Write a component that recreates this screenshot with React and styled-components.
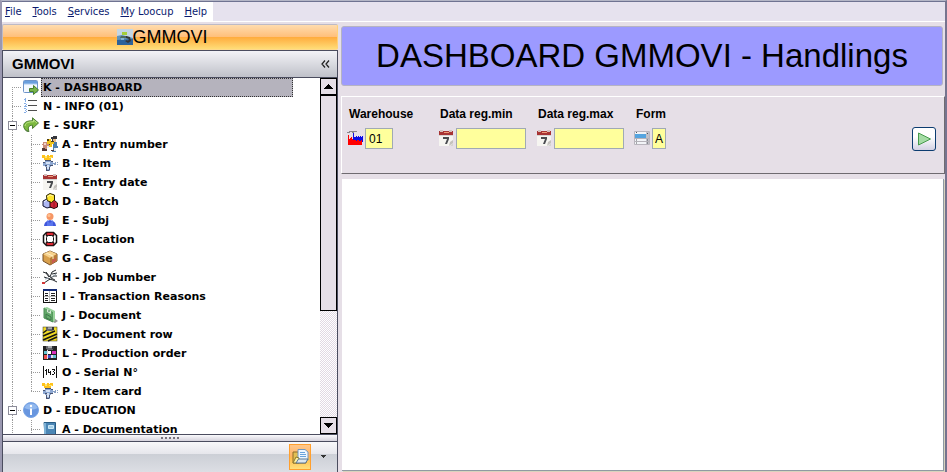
import React, { useState } from "react";
import styled, { createGlobalStyle, css } from "styled-components";

const GlobalStyle = createGlobalStyle`
  * { box-sizing: border-box; }
  body { margin: 0; background: #e6dfe7; color: #000; }
  button, input { font: inherit; color: inherit; }
`;

const INK = "#4b4d5f";

const Window = styled.div`
  height: 100vh;
  display: flex;
  flex-direction: column;
  overflow: hidden;
  background: #e6dfe7;
  border-top: 1px solid #b4b6c6;
  border-left: 2px solid #9a98b0;
  border-right: 2px solid #76748f;
  font-family: "Liberation Sans", Arial, sans-serif;
`;

const MenuStrip = styled.nav`
  display: flex;
  flex: none;
  background: #e6e2ee;
  border-top: 1px solid #6f7391;
  border-bottom: 1px solid #fff;
`;

const MenuItems = styled.div`
  display: flex;
  gap: 11px;
  height: 19px;
  padding: 0 6px 0 3px;
  background: #fff;
`;

const MenuButton = styled.button`
  padding: 0;
  border: 0;
  background: none;
  color: #0a1a6e;
  font: 11px/19px "DejaVu Sans Condensed", "Noto Sans", sans-serif;
  white-space: nowrap;
`;

const Columns = styled.div`
  flex: 1;
  min-height: 0;
  display: flex;
  gap: 3px;
  padding-top: 2px;
`;

const Sidebar = styled.aside`
  flex: none;
  width: 336px;
  display: flex;
  flex-direction: column;
  min-height: 0;
`;

const ModuleBar = styled.div`
  flex: none;
  display: flex;
  align-items: center;
  justify-content: center;
  height: 26px;
  padding-right: 16px;
  border: 1px solid #bdbac6;
  border-right-color: #ffd27a;
  border-bottom-color: #ffd98a;
  border-radius: 2px;
  background: linear-gradient(#ffdcae 0, #ffc07c 48%, #ffab3c 50%, #ffdd78 100%);
  font-size: 18px;
  line-height: 24px;
`;

const SidePanel = styled.div`
  flex: 1;
  min-height: 0;
  display: flex;
  flex-direction: column;
  border: 1px solid ${INK};
  border-bottom: 0;
`;

const PanelHeader = styled.header`
  flex: none;
  display: flex;
  justify-content: space-between;
  align-items: center;
  height: 27px;
  padding: 0 7px 0 9px;
  border-bottom: 1px solid ${INK};
  background: linear-gradient(#f3f3f7, #bfc1c9);
`;

const PanelTitle = styled.h2`
  margin: 0;
  font-size: 15px;
  line-height: 24px;
`;

const IconButton = styled.button`
  display: flex;
  padding: 0;
  border: 0;
  background: none;
`;

const TreeArea = styled.div`
  flex: 1;
  min-height: 0;
  display: flex;
  background: #fff;
`;

const Tree = styled.ul`
  flex: 1;
  min-width: 0;
  margin: 0;
  padding: 0;
  overflow: hidden;
  list-style: none;
  font: bold 11px/19px "DejaVu Sans", Verdana, sans-serif;
`;

const Branch = styled.ul`
  margin: 0;
  padding: 0;
  list-style: none;
`;

const Row = styled.div`
  display: flex;
  height: 19px;
  padding-right: 27px;
`;

const dotsDown = "repeating-linear-gradient(#9a9a9a 0 1px, transparent 1px 2px)";
const dotsAcross = "repeating-linear-gradient(90deg, #9a9a9a 0 1px, transparent 1px 2px)";

const lines = {
  none: css``,
  pass: css`background: ${dotsDown} 9px 0 / 1px 19px no-repeat;`,
  first: css`background: ${dotsDown} 9px 9px / 1px 10px no-repeat, ${dotsAcross} 9px 9px / 10px 1px no-repeat;`,
  tee: css`background: ${dotsDown} 9px 0 / 1px 19px no-repeat, ${dotsAcross} 9px 9px / 10px 1px no-repeat;`,
  last: css`background: ${dotsDown} 9px 0 / 1px 10px no-repeat, ${dotsAcross} 9px 9px / 10px 1px no-repeat;`,
};

const Gutter = styled.span`
  flex: none;
  display: flex;
  align-items: center;
  justify-content: center;
  width: 19px;
  ${(p) => lines[p.$line]}
`;

const Expander = styled.button`
  display: flex;
  width: 9px;
  height: 9px;
  padding: 0;
  border: 1px solid #8d8d9a;
  background: #fff;
`;

const IconCell = styled.span`
  flex: none;
  display: flex;
  align-items: flex-start;
  width: 19px;
  padding: 1px 0 0 1px;
`;

const NodeLabel = styled.button`
  flex: 1;
  height: 19px;
  padding: 0 1px;
  border: 1px dotted ${(p) => (p.$selected ? "#333" : "transparent")};
  background: ${(p) => (p.$selected ? "#b5b3bd" : "transparent")};
  line-height: 17px;
  text-align: left;
  white-space: nowrap;
`;

const ScrollTrack = styled.div`
  flex: none;
  display: flex;
  flex-direction: column;
  width: 17px;
  background: repeating-conic-gradient(#e2d9e3 0 25%, #fff 0 50%) 0 0 / 2px 2px;
`;

const ScrollButton = styled.button`
  flex: none;
  display: flex;
  align-items: center;
  justify-content: center;
  height: 17px;
  padding: 0;
  border: 1px solid #000;
  background: #e6dfe7;
`;

const ScrollThumb = styled.div`
  height: 67%;
  border: 1px solid #000;
  background: #e6dfe7;
`;

const ScrollRail = styled.div`
  flex: 1;
  min-height: 0;
`;

const Splitter = styled.div`
  flex: none;
  display: flex;
  align-items: center;
  justify-content: center;
  height: 8px;
  border: solid ${INK};
  border-width: 1px 0;
  background: linear-gradient(#fafafd, #d5d2dc);
`;

const SideTools = styled.footer`
  flex: none;
  display: flex;
  align-items: flex-start;
  justify-content: flex-end;
  gap: 10px;
  height: 30px;
  padding: 2px 11px 0 0;
  background: linear-gradient(#f8f8fa 0, #e6e6ec 12px, #cccfd6 12px, #dcdee4 100%);
`;

const FolderButton = styled(IconButton)`
  align-items: center;
  justify-content: center;
  width: 22px;
  height: 26px;
  border: 1px solid #ff9f2e;
  background: linear-gradient(#ffc88c 0, #ffb365 45%, #ffbd4c 55%, #ffe07c 100%);
`;

const MoreButton = styled(IconButton)`
  align-items: center;
  height: 25px;
`;

const Main = styled.main`
  flex: 1;
  min-width: 0;
  display: flex;
  flex-direction: column;
`;

const Banner = styled.h1`
  flex: none;
  margin: 2px 2px 0 0;
  padding: 10px 0;
  border: 1px solid #b5b3c3;
  border-radius: 3px;
  background: #9c9aff;
  font-size: 33px;
  font-weight: 400;
  line-height: 38px;
  text-align: center;
  white-space: nowrap;
`;

const FilterPanel = styled.form`
  flex: none;
  display: grid;
  grid-template-columns: 91px 98px 98px auto 1fr;
  margin-top: 10px;
  padding: 9px 8px 24px 5px;
  border: 1px solid #fff;
  border-right-color: #6f6b70;
  border-bottom-color: #6f6b70;
`;

const Field = styled.div`
  display: grid;
  grid-template-columns: 16px auto;
  justify-content: start;
  align-items: center;
  column-gap: 2px;
`;

const FieldLabel = styled.label`
  grid-column: 1 / -1;
  padding-left: 2px;
  font-size: 12px;
  font-weight: 700;
  line-height: 16px;
  white-space: nowrap;
`;

const FieldInput = styled.input`
  width: ${(p) => p.$width};
  height: 21px;
  margin-top: 6px;
  padding: 0 0 0 ${(p) => (p.$tight ? "2px" : "3px")};
  border: 1px solid #a0aab4;
  border-radius: 0;
  background: #ffff9c;
  font-size: 12px;
`;

const FieldIcon = styled.span`
  display: flex;
  margin-top: 5px;
`;

const RunButton = styled.button`
  justify-self: end;
  align-self: end;
  display: flex;
  align-items: center;
  justify-content: center;
  width: 24px;
  height: 24px;
  margin-bottom: -2px;
  padding: 0;
  border: 1px solid #0c3c70;
  border-radius: 3px;
  background: linear-gradient(#fff 40%, #d3d1e3);
`;

const Results = styled.section`
  flex: 1;
  min-height: 0;
  margin: 5px 1px 1px 1px;
  background: #fff;
  border: solid #8f9aa3;
  border-width: 0 1px 1px 0;
  box-shadow: 1px 1px 0 #d8d3bd;
`;

const Glyph = styled.svg`
  display: block;
  flex: none;
`;

function Svg({ w = 16, h = 16, crisp, children }) {
  return (
    <Glyph width={w} height={h} viewBox={`0 0 ${w} ${h}`} fill="none" aria-hidden="true"
      shapeRendering={crisp ? "crispEdges" : "auto"}>
      {children}
    </Glyph>
  );
}

const ModuleIcon = () => (
  <Svg>
    <rect width="16" height="16" fill="#c4d6e4" />
    <path d="M0 7l5-1 11 3v7H0z" fill="#5e92bb" />
    <path d="M0 11l16-1v6H0z" fill="#2c639a" />
    <path d="M5 3h5v3H5z" fill="#a4cf3a" />
    <path d="M4 7h6v2H3z" fill="#4d6a60" />
    <path d="M9 7l4 1 1 4-3 2-3-2 2-1 1 1 1-2-3-1z" fill="#34383b" />
    <rect x="4" y="9" width="3" height="2" fill="#83b4d4" />
  </Svg>
);

const WindowIcon = () => (
  <Svg>
    <rect x=".5" y="1.500" width="14" height="12" rx="1" fill="#f5f9ff" stroke="#6e94c9" />
    <path d="M1 2h13v3H1z" fill="#6a9fdd" />
    <path d="M1 5h13" stroke="#abc9ee" />
    <path d="M6.500 9.500h4v-3l5 4.500-5 4.500v-3h-4z" fill="#78b44b" stroke="#477f2c" />
  </Svg>
);

const ListIcon = () => (
  <Svg crisp>
    <path d="M5 2h9M5 7h9M5 12h9" stroke="#4f4f4f" transform="translate(0 .5)" />
    <path d="M2 0h1v4H2zM1 1h1v1H1zM1 5h2v1H1zM3 6h1v1H3zM2 7h1v1H2zM1 8h3v1H1zM1 10h2v1H1zM3 11h1v1H3zM2 12h1v1H2zM3 13h1v1H3zM1 14h2v1H1z" fill="#86aee6" />
  </Svg>
);

const SurfIcon = () => (
  <Svg>
    <path d="M9.500.8l6 5.200-6 5.500V8.200c-4 0-5 2.500-3.500 6.300C2.500 14 .5 11.500.7 8.500 1 5 4.500 3.700 9.500 3.800z" fill="#7db93f" stroke="#4c7d33" />
    <path d="M2 9c.5-3.500 4-4.300 8.500-4.200V3l3.500 3" stroke="#bde287" />
    <path d="M2 12.500C3 14 4.500 14.500 6 14.500" stroke="#567d45" />
  </Svg>
);

const WorkerIcon = () => (
  <Svg crisp>
    <path d="M9 1h2V0h4v3h-1v2h-4V3H9z" fill="#35363b" />
    <path d="M11 3h3v3h-3z" fill="#e8bd8b" />
    <path d="M11 6h4v4h1v2h-2v4h-4v-2h1z" fill="#4d7eae" />
    <path d="M5 3h4v2h3v3h-2v3H7V9H4V6h1z" fill="#f0c31c" />
    <path d="M5 3h2v2H5zM9 5h3v1H9zM6 8h2v1H6z" fill="#534112" />
    <path d="M1 6h4v2h2v4H5v2H1V9H0V8h1z" fill="#ca8d7d" />
    <path d="M2 7h2v2H2z" fill="#f0d2c9" />
    <path d="M0 12h3v1h2v2H0zM9 14h3v1H9z" fill="#543b3a" />
    <path d="M12 12h2v3h-2zM5 10h2v2H5z" fill="#e5eaf0" />
  </Svg>
);

const TapIcon = () => (
  <Svg crisp>
    <path d="M0 0h3v1h2V0h2v1h1V0h3v3H9v2H2V3H0z" fill="#ffc31c" />
    <path d="M3 1h2v2H3zM7 2h3v1H7z" fill="#ffe56d" />
    <path d="M3 5h6v1h2v4H9v2H8v4H4v-4H3v-1H1V7h2z" fill="#8ca7d2" />
    <path d="M3 5h6v1H3zM1 7h2v1H1zM3 10h2v1H3zM9 6h2v1H9zM8 10h3v1H8zM4 12h1v3H4zM7 12h1v3H7zM4 15h3v1H4z" fill="#4a5470" />
    <path d="M11 8h2V7h1v3h-2V9h-1zM15 7h1v1h-1zM15 9h1v1h-1z" fill="#88a0c4" />
    <path d="M4 7h4v2H4zM5 10h2v4H5z" fill="#d5e2f5" />
  </Svg>
);

const CalendarIcon = () => (
  <Svg>
    <path d="M1 2h14v14H1z" fill="#d5d3d1" />
    <path d="M1 6h14v7l-3 3H1z" fill="#f6f5f1" />
    <path d="M1 1h14v4H1z" fill="#a73434" />
    <path d="M2 0h3v2H2zM11 0h3v2h-3z" fill="#d5c0bd" />
    <path d="M6 2.500h5" stroke="#ed9b78" />
    <path d="M5 7h6v2l-2 5H7l2-5H5z" fill="#4a4c50" />
    <path d="M11 16l1-4 3-2v3z" fill="#c4c1bd" />
  </Svg>
);

const BatchIcon = () => (
  <Svg>
    <path d="M1 8l4-2 4 3v5l-4 1-4-2z" fill="#aeb8f4" stroke="#10112d" />
    <path d="M8 9l4-2 3.500 3v4L12 15.500 8 14z" fill="#cf2739" stroke="#26070a" />
    <path d="M4.500 2.500L8 .5l4.500 1.500v5L9.500 9.500 5 7.500z" fill="#ffe52c" stroke="#282307" />
    <path d="M5 4l3-2 3 1" stroke="#fff6a2" />
    <path d="M2 9l3-2" stroke="#eef1ff" />
    <path d="M12 9v5" stroke="#991229" />
  </Svg>
);

const PersonIcon = () => (
  <Svg>
    <path d="M2 14c.5-4 2.500-5 6-6 3.500 1 5.500 2 6 6z" fill="#4057dc" />
    <path d="M5 8l3 3 3-3v6H5z" fill="#5975ed" />
    <circle cx="8" cy="4.500" r="3.500" fill="#f69664" />
    <circle cx="7" cy="3.500" r="1.500" fill="#ffc08f" />
  </Svg>
);

const BuoyIcon = () => (
  <Svg>
    <path d="M4.500 1.500h7l3 3v7l-3 3h-7l-3-3v-7z" fill="#fff" stroke="#111" strokeWidth="1.500" />
    <path d="M5 1.500h6l1 3H4zM4 11.500h8l-1 3H5z" fill="#dd2933" stroke="#390b0d" />
    <rect x="4.500" y="4.500" width="7" height="7" rx="2" fill="#fff" stroke="#111" />
  </Svg>
);

const BoxIcon = () => (
  <Svg>
    <path d="M1 4l7-3 7 3v7l-7 4-7-4z" fill="#d8a04d" stroke="#765128" />
    <path d="M1 4l7-3 7 3-7 4z" fill="#f6d28e" />
    <path d="M8 8l7-4v7l-7 4z" fill="#b87b38" />
    <path d="M4 3l7 3v3" stroke="#fff0c4" />
    <path d="M10 10l4-2v3l-2 1-2 2z" fill="#c85a50" />
  </Svg>
);

const ToolsIcon = () => (
  <Svg>
    <path d="M1 3l3 1 3 4M4 3l4 5M8 8l2-5 4-2M10 5l5-1M8 9l4-2h3M7 10l4 1 4 2M9 9l4 2M2 8l6 2-6 4" stroke="#25292d" />
    <path d="M3 10l4-1M10 8l4-3" stroke="#909ca7" />
    <path d="M0 14h3" stroke="#d23636" strokeWidth="2" />
  </Svg>
);

const TableIcon = () => (
  <Svg crisp>
    <rect x="1.500" y="1.500" width="13" height="13" fill="#fff" stroke="#111" />
    <path d="M1 1h14v2H1z" fill="#142c77" />
    <path d="M7 3h1v11H7zM2 8h12v1H2z" fill="#bbb" />
    <path d="M3 5h3v1H3zM9 5h4v1H9zM3 7h3v1H3zM9 7h4v1H9zM3 10h3v1H3zM9 10h4v1H9zM3 12h3v1H3zM9 12h4v1H9z" fill="#222" />
  </Svg>
);

const DocumentIcon = () => (
  <Svg>
    <path d="M5 12l7-1 4 3-3 2z" fill="#979797" />
    <path d="M2 1l9 4v10l-9-4z" fill="#62a869" stroke="#488c52" />
    <path d="M2 1l3-1 8 4v10l-2 1V5z" fill="#98d29a" />
    <path d="M5 2l4 2v3L5 5z" fill="#d6e8d6" />
    <path d="M7 3v2M4 7l5 3v3l-5-2z" stroke="#3e784a" />
  </Svg>
);

const StripeIcon = ({ production }) => (
  <Svg crisp={production}>
    <rect x="1" y="1" width="14" height="14" fill={production ? "#222" : "#f2db25"} />
    {production ? (
      <>
        <path d="M2 6h3v3H2zM11 10h3v3h-3z" fill="#66c5d2" />
        <path d="M6 6h3v3H6z" fill="#fff" />
        <path d="M10 6h4v3h-4z" fill="#d832bc" />
        <path d="M2 10h3v4H2z" fill="#ef4e4c" />
        <path d="M6 10h3v3H6z" fill="#4248c9" />
        <path d="M9 10h2v3H9zM5 5h1v9H5z" fill="#e3e0eb" />
      </>
    ) : (
      <path d="M1 7l4-3M1 10l12-5M1 14l14-6M6 15l9-4" stroke="#161612" strokeWidth="1.500" />
    )}
    <path d="M4 1h8v3l-2 1H6L4 4z" fill="#65676c" />
    <path d="M6 1h4v2H6z" fill="#a7a9ac" />
    <path d="M10 1h2v3h-2z" fill="#303237" />
    {!production && <rect x="1" y="1" width="14" height="14" stroke="#37341d" strokeWidth=".5" />}
  </Svg>
);

const SerialIcon = () => (
  <Svg crisp>
    <path d="M1 2h1v12H1zM14 2h1v12h-1zM4 5h1v6H4zM3 6h1v1H3zM6 5h1v4H6zM6 8h3v1H6zM8 7h1v4H8zM10 5h3v1h-3zM12 6h1v1h-1zM11 7h1v1h-1zM12 8h1v2h-1zM10 10h2v1h-2z" fill="#111" />
  </Svg>
);

const InfoIcon = () => (
  <Svg>
    <circle cx="8" cy="8" r="7.500" fill="#6896df" stroke="#79a5e5" />
    <path d="M1.500 6a7 7 0 0113 0c-4 2-8 2-13 0z" fill="#92b9ef" />
    <path d="M8 6.500V13" stroke="#fff" strokeWidth="2" />
    <circle cx="8" cy="4" r="1.200" fill="#fff" />
  </Svg>
);

const BookIcon = () => (
  <Svg>
    <path d="M2 1.500h11.500v13H3z" fill="#4b86b5" stroke="#285d86" />
    <path d="M3 2v12" stroke="#7db1d5" strokeWidth="2" />
    <path d="M6.500 4.500h5v3h-5z" fill="#a4cee6" stroke="#cce8f7" />
    <path d="M3 14h10" stroke="#e1edf4" />
  </Svg>
);

const FactoryIcon = () => (
  <Svg crisp>
    <path d="M1 5h1v4l3-2v2l2-1v2h8v5H1z" fill="#f00" />
    <path d="M6 3h1v4h1l2-2v2l2-2v2l2-2v2l2-2v7h-1v-2h-1v1h-2v-1h-2v1H9v-1H6z" fill="#0b0be5" />
    <path d="M0 2h2V1h3v1H3v1H0zM5 1h5v1H7v1H5z" fill="#8a878d" />
  </Svg>
);

const FormIcon = () => (
  <Svg>
    <path d="M.5 1.500h15v13H.5z" fill="#f2f4f7" stroke="#b9b5bd" />
    <path d="M12 2h3v12h-3z" fill="#c0c0c8" />
    <path d="M1 4h11v4H1z" fill="#55a4df" />
    <path d="M1 8.500h14M1 11.500h14" stroke="#b5b2b9" />
    <path d="M2 2.500h1M2 10h1M2 13h1M13 3.500h1M13 10h1M13 13h1" stroke="#53585d" />
  </Svg>
);

const FolderIcon = () => (
  <Svg w={17} h={16}>
    <path d="M1 3h5l1 2h7v9H1z" fill="#e2bf53" stroke="#8d6d28" />
    <path d="M6 .5h7l3 2.500v8H6z" fill="#eef7ff" stroke="#7598bd" />
    <path d="M8 3.500h5M8 5.500h6M8 7.500h6" stroke="#6aa4dc" />
    <path d="M1 14l3-6 3 1v5z" fill="#fff1a1" stroke="#8d792c" />
    <path d="M4 14l2.500-4H16l-2.500 4z" fill="#dbe6ef" stroke="#5a7894" />
  </Svg>
);

const PlayIcon = () => (
  <Svg>
    <path d="M2.500 2l12 6-12 6z" fill="#a5dca5" stroke="#479b4c" />
  </Svg>
);

const ArrowIcon = ({ down, small }) =>
  small ? (
    <Svg w={5} h={3} crisp><path d="M0 0h5v1H4v1H3v1H2V2H1V1H0z" fill="#333" /></Svg>
  ) : (
    <Svg w={9} h={5} crisp>
      <path d={down ? "M0 0h9v1H8v1H7v1H6v1H5v1H4V4H3V3H2V2H1V1H0z" : "M4 0h1v1h1v1h1v1h1v1h1v1H0V4h1V3h1V2h1V1h1z"} fill="#000" />
    </Svg>
  );

const CollapseIcon = () => (
  <Svg w={9} h={8}>
    <path d="M4 .5L1 4l3 3.500M8 .5L5 4l3 3.500" stroke="#222" strokeWidth="1.250" />
  </Svg>
);

const GripIcon = () => (
  <Svg w={19} h={3} crisp>
    <path d="M0 1h2M4 1h2M8 1h2M12 1h2M16 1h2" stroke="#77737e" strokeWidth="2" />
  </Svg>
);

const menus = ["File", "Tools", "Services", "My Loocup", "Help"];

const tree = [
  { label: "K - DASHBOARD", icon: <WindowIcon /> },
  { label: "N - INFO (01)", icon: <ListIcon /> },
  {
    label: "E - SURF",
    icon: <SurfIcon />,
    children: [
      { label: "A - Entry number", icon: <WorkerIcon /> },
      { label: "B - Item", icon: <TapIcon /> },
      { label: "C - Entry date", icon: <CalendarIcon /> },
      { label: "D - Batch", icon: <BatchIcon /> },
      { label: "E - Subj", icon: <PersonIcon /> },
      { label: "F - Location", icon: <BuoyIcon /> },
      { label: "G - Case", icon: <BoxIcon /> },
      { label: "H - Job Number", icon: <ToolsIcon /> },
      { label: "I - Transaction Reasons", icon: <TableIcon /> },
      { label: "J - Document", icon: <DocumentIcon /> },
      { label: "K - Document row", icon: <StripeIcon /> },
      { label: "L - Production order", icon: <StripeIcon production /> },
      { label: "O - Serial N°", icon: <SerialIcon /> },
      { label: "P - Item card", icon: <TapIcon /> },
    ],
  },
  {
    label: "D - EDUCATION",
    icon: <InfoIcon />,
    children: [{ label: "A - Documentation", icon: <BookIcon />, more: true }],
  },
];

function TreeNode({ node, line, nested, selected, onSelect }) {
  const [open, setOpen] = useState(true);
  return (
    <li>
      <Row>
        {nested && <Gutter $line="pass" />}
        <Gutter $line={line}>
          {node.children && (
            <Expander type="button" aria-label={`Toggle ${node.label}`} aria-expanded={open} onClick={() => setOpen(!open)}>
              <Svg w={7} h={7} crisp>
                <path d={open ? "M1 3h5v1H1z" : "M1 3h5v1H1zM3 1h1v5H3z"} fill="#000" />
              </Svg>
            </Expander>
          )}
        </Gutter>
        <IconCell>{node.icon}</IconCell>
        <NodeLabel type="button" $selected={selected === node.label} onClick={() => onSelect(node.label)}>
          {node.label}
        </NodeLabel>
      </Row>
      {node.children && open && (
        <Branch>
          {node.children.map((child, i) => (
            <TreeNode
              key={child.label}
              node={child}
              nested
              line={i === node.children.length - 1 && !child.more ? "last" : "tee"}
              selected={selected}
              onSelect={onSelect}
            />
          ))}
        </Branch>
      )}
    </li>
  );
}

function FilterField({ id, label, icon, width, tight, value = "" }) {
  return (
    <Field>
      <FieldLabel htmlFor={id}>{label}</FieldLabel>
      <FieldIcon>{icon}</FieldIcon>
      <FieldInput id={id} type="text" $width={width} $tight={tight} defaultValue={value} />
    </Field>
  );
}

export default function App() {
  const [selected, setSelected] = useState("K - DASHBOARD");
  return (
    <Window>
      <GlobalStyle />
      <MenuStrip>
        <MenuItems>
          {menus.map((name) => (
            <MenuButton key={name} type="button">
              <u>{name[0]}</u>{name.slice(1)}
            </MenuButton>
          ))}
        </MenuItems>
      </MenuStrip>
      <Columns>
        <Sidebar>
          <ModuleBar><ModuleIcon />GMMOVI</ModuleBar>
          <SidePanel>
            <PanelHeader>
              <PanelTitle>GMMOVI</PanelTitle>
              <IconButton type="button" aria-label="Collapse panel"><CollapseIcon /></IconButton>
            </PanelHeader>
            <TreeArea>
              <Tree>
                {tree.map((node, i) => (
                  <TreeNode key={node.label} node={node} line={i === 0 ? "first" : "tee"} selected={selected} onSelect={setSelected} />
                ))}
              </Tree>
              <ScrollTrack>
                <ScrollButton type="button" aria-label="Scroll up"><ArrowIcon /></ScrollButton>
                <ScrollRail><ScrollThumb /></ScrollRail>
                <ScrollButton type="button" aria-label="Scroll down"><ArrowIcon down /></ScrollButton>
              </ScrollTrack>
            </TreeArea>
            <Splitter><GripIcon /></Splitter>
            <SideTools>
              <FolderButton type="button" aria-label="Documents"><FolderIcon /></FolderButton>
              <MoreButton type="button" aria-label="More"><ArrowIcon small /></MoreButton>
            </SideTools>
          </SidePanel>
        </Sidebar>
        <Main>
          <Banner>DASHBOARD GMMOVI - Handlings</Banner>
          <FilterPanel onSubmit={(e) => e.preventDefault()}>
            <FilterField id="warehouse" label="Warehouse" icon={<FactoryIcon />} width="28px" value="01" />
            <FilterField id="date-min" label="Data reg.min" icon={<CalendarIcon />} width="70px" />
            <FilterField id="date-max" label="Data reg.max" icon={<CalendarIcon />} width="70px" />
            <FilterField id="form" label="Form" icon={<FormIcon />} width="14px" value="A" tight />
            <RunButton type="submit" aria-label="Run"><PlayIcon /></RunButton>
          </FilterPanel>
          <Results aria-label="Results" />
        </Main>
      </Columns>
    </Window>
  );
}
